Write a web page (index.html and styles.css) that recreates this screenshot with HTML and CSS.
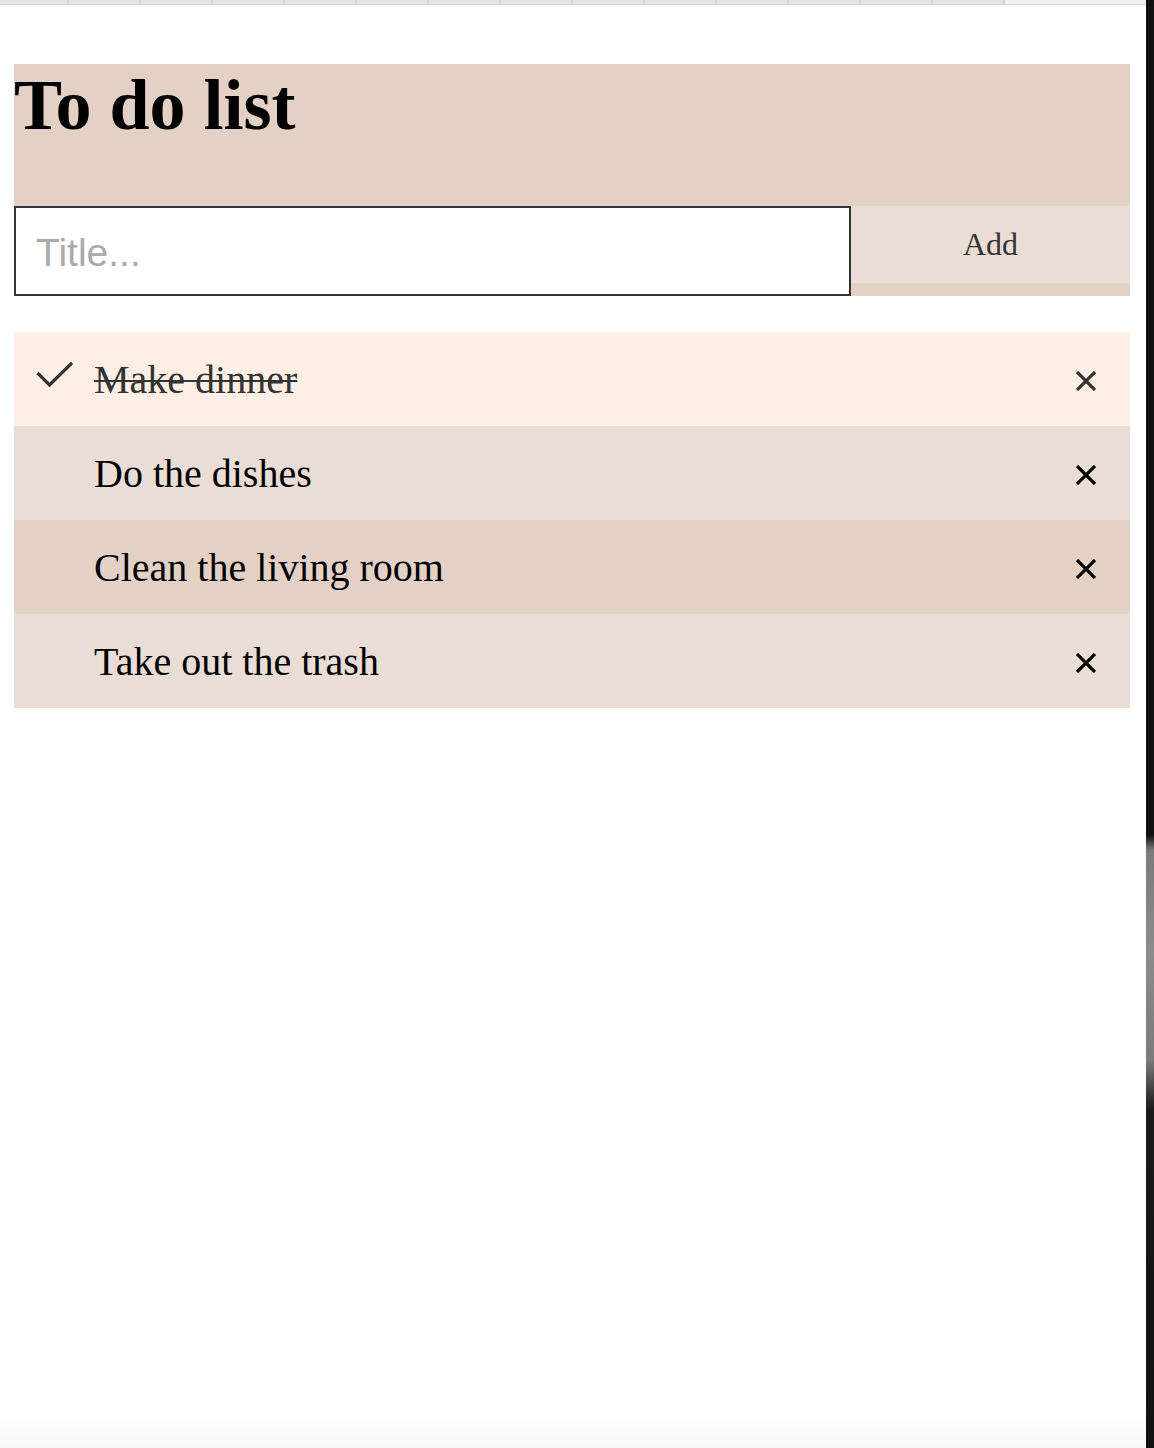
FILE: index.html
```html
<!DOCTYPE html>
<html lang="en">
<head>
<meta charset="utf-8">
<title>To do list</title>
<link rel="stylesheet" href="styles.css">
</head>
<body>
<div class="screen">
  <div class="page">
    <div class="tabstrip">
      <span class="tab first"></span><span class="tab"></span><span class="tab"></span><span class="tab"></span><span class="tab"></span><span class="tab"></span><span class="tab"></span><span class="tab"></span><span class="tab"></span><span class="tab"></span><span class="tab"></span><span class="tab"></span><span class="tab"></span><span class="tab"></span><span class="tab-rest"></span>
    </div>
    <main class="app">
      <header class="header">
        <h1 class="title">To do list</h1>
        <form class="add-form">
          <input class="title-input" type="text" placeholder="Title...">
          <button class="add-btn" type="button">Add</button>
        </form>
      </header>
      <ul class="todo-list">
        <li class="todo checked">
          <svg class="check" width="38" height="28" viewBox="0 0 38 28"><polyline points="1.5,11 13.5,23 36,0.8" fill="none" stroke="#333" stroke-width="3.2"/></svg>
          <span class="label">Make dinner</span>
          <svg class="close" width="20" height="20" viewBox="0 0 20 20"><path d="M1 1 L19 19 M19 1 L1 19" stroke="#333" stroke-width="3.2" fill="none"/></svg>
        </li>
        <li class="todo tone-a">
          <span class="label">Do the dishes</span>
          <svg class="close" width="20" height="20" viewBox="0 0 20 20"><path d="M1 1 L19 19 M19 1 L1 19" stroke="#000" stroke-width="3.2" fill="none"/></svg>
        </li>
        <li class="todo tone-b">
          <span class="label">Clean the living room</span>
          <svg class="close" width="20" height="20" viewBox="0 0 20 20"><path d="M1 1 L19 19 M19 1 L1 19" stroke="#000" stroke-width="3.2" fill="none"/></svg>
        </li>
        <li class="todo tone-a">
          <span class="label">Take out the trash</span>
          <svg class="close" width="20" height="20" viewBox="0 0 20 20"><path d="M1 1 L19 19 M19 1 L1 19" stroke="#000" stroke-width="3.2" fill="none"/></svg>
        </li>
      </ul>
    </main>
  </div>
  <div class="edge"></div>
</div>
</body>
</html>
```
FILE: styles.css
```css
html, body {
  margin: 0;
  padding: 0;
  height: 100%;
}

body {
  font-family: "Liberation Serif", "Times New Roman", serif;
  background: #fff;
}

.screen {
  display: flex;
  height: 1448px;
  overflow: hidden;
}

.page {
  width: 1146px;
  flex: none;
  display: flex;
  flex-direction: column;
  background: linear-gradient(to bottom, #ffffff 0, #ffffff 1410px, #f8f8f8 1448px);
}

.edge {
  flex: 1;
  background: linear-gradient(to bottom, #111 0, #111 835px, #7a7a7a 850px, #8c8c8c 950px, #7a7a7a 1060px, #1a1a1a 1110px, #111 1448px);
}

.tabstrip {
  display: flex;
  height: 4px;
  border-bottom: 1px solid #d9d9d9;
}

.tab {
  width: 70px;
  flex: none;
  background: #e6e6e6;
  border-right: 2px solid #d2d2d2;
}

.tab.first {
  width: 67px;
}

.tab-rest {
  flex: 1;
  background: #f1f1f1;
}

.app {
  padding: 59px 16px 0 14px;
}

.header {
  background: #e3d1c6;
}

.title {
  margin: 0 0 59px;
  font-size: 72px;
  font-weight: bold;
  line-height: 83px;
  color: #000;
}

.add-form {
  display: flex;
  align-items: flex-start;
  margin: 0;
}

.title-input {
  box-sizing: border-box;
  width: 75%;
  height: 90px;
  margin: 0;
  padding: 4px 20px 0;
  border: 2px solid #333;
  border-radius: 0;
  background: #fff;
  font-family: "Liberation Sans", Arial, sans-serif;
  font-size: 39px;
  color: #000;
  outline: none;
}

.title-input::placeholder {
  color: #aaa;
}

.add-btn {
  width: 25%;
  height: 77px;
  margin: 0;
  padding: 0;
  border: none;
  background: #e9ddd5;
  font-family: "Liberation Serif", "Times New Roman", serif;
  font-size: 32px;
  color: #333;
}

.todo-list {
  list-style: none;
  margin: 36px 0 0;
  padding: 0;
}

.todo {
  display: flex;
  align-items: center;
  height: 94px;
  padding: 0 34px 0 80px;
  position: relative;
  font-size: 40px;
  color: #000;
}

.todo.checked {
  background: #fdefe6;
  color: #333;
}

.todo.checked .label {
  text-decoration: line-through;
  text-decoration-thickness: 2px;
}

.todo.tone-a {
  background: #e9ddd5;
}

.todo.tone-b {
  background: #e3d1c6;
}

.label {
  flex: 1;
}

.check {
  position: absolute;
  left: 22px;
  top: 30px;
}

.close {
  flex: none;
  margin-top: 4px;
}
```
